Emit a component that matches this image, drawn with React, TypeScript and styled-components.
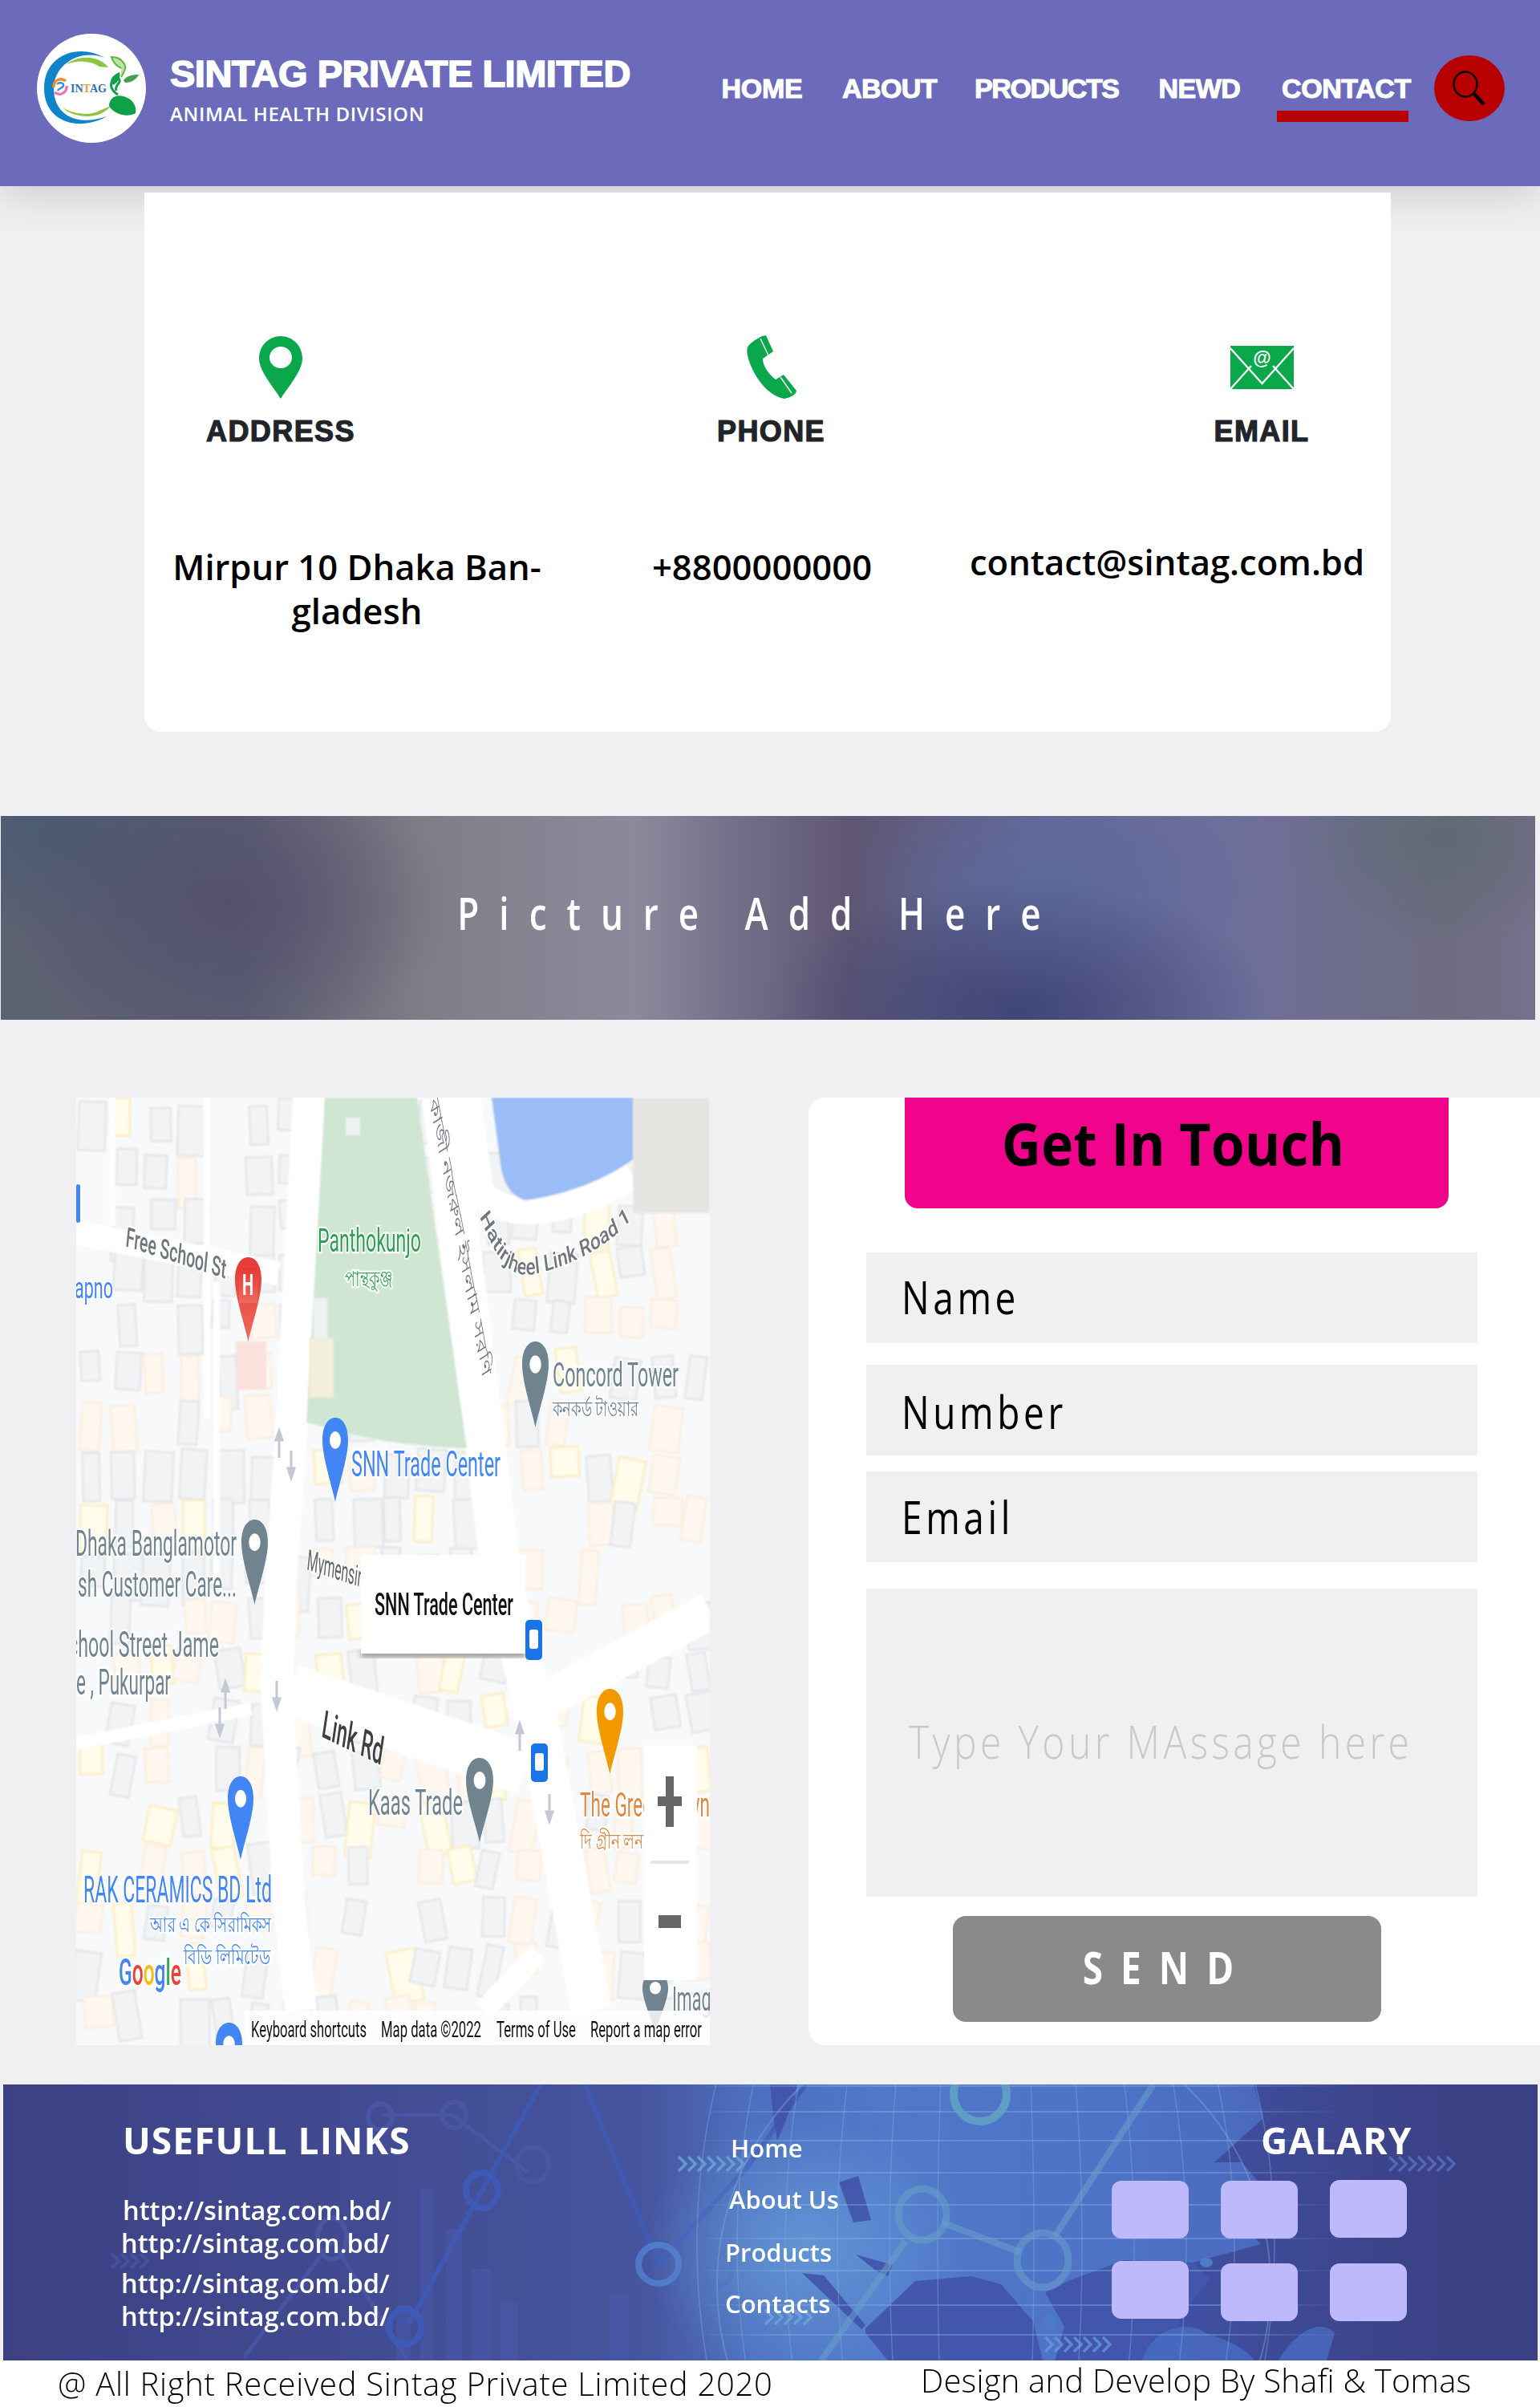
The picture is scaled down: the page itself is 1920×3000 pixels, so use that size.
import React from "react";
import styled, { createGlobalStyle } from "styled-components";

const Global = createGlobalStyle`
  html, body { margin: 0; padding: 0; background: #f0f0f2; }
  * { box-sizing: border-box; }
`;

const OPEN = `"Open Sans", "Noto Sans", sans-serif`;
const ARIAL = `"Liberation Sans", Arial, sans-serif`;
const ROBOTO = `Roboto, "Noto Sans", sans-serif`;

const Page = styled.div`
  width: 1920px;
  height: 3000px;
  overflow: hidden;
  background: #f0f0f2;
  font-family: ${OPEN};
`;

/* ---------- header ---------- */
const Header = styled.header`
  height: 232px;
  background: #6c6bbb;
  box-shadow: 0 8px 50px rgba(0, 0, 0, 0.17);
  display: flex;
  align-items: center;
  padding: 0 44px 12px 46px;
`;
const LogoMark = styled.svg`
  width: 136px;
  height: 136px;
  flex: none;
`;
const Brand = styled.div`
  margin-left: 30px;
  padding-top: 6px;
  color: #fff;
`;
const BrandName = styled.div`
  font: 700 47px/40px ${ARIAL};
  letter-spacing: -0.5px;
  -webkit-text-stroke: 1.6px #fff;
  white-space: nowrap;
`;
const BrandSub = styled.div`
  margin-top: 18px;
  font: 600 24px/24px ${OPEN};
  letter-spacing: 0.65px;
  white-space: nowrap;
`;
const Nav = styled.nav`
  margin-left: auto;
  display: flex;
  align-items: center;
  gap: 50px;
`;
const NavLink = styled.a<{ $active?: boolean; $width: number; $spacing: number; $nudge?: number }>`
  position: relative;
  left: ${(p) => p.$nudge ?? 0}px;
  width: ${(p) => p.$width}px;
  text-align: center;
  color: #fff;
  font: 700 34px/34px ${ARIAL};
  letter-spacing: ${(p) => p.$spacing}px;
  -webkit-text-stroke: 1.1px #fff;
  white-space: nowrap;
  &::after {
    content: "";
    display: ${(p) => (p.$active ? "block" : "none")};
    position: absolute;
    left: -6px;
    right: 2px;
    top: 45px;
    height: 14px;
    background: #b80000;
  }
`;
const SearchButton = styled.button`
  margin-left: 30px;
  width: 88px;
  height: 82px;
  border: 0;
  padding: 0;
  border-radius: 50%;
  background: #b80000;
  display: flex;
  align-items: center;
  justify-content: center;
`;

/* ---------- contact card ---------- */
const InfoCard = styled.section`
  margin: 8px 0 0 180px;
  width: 1554px;
  height: 672px;
  background: #fff;
  border-radius: 0 0 20px 20px;
  padding-top: 178px;
`;
const InfoHeads = styled.div`
  display: flex;
  justify-content: space-between;
  padding: 0 61px 0 70px;
`;
const InfoHead = styled.div`
  width: 200px;
  display: flex;
  flex-direction: column;
  align-items: center;
`;
const IconSlot = styled.div`
  height: 80px;
  display: flex;
  align-items: center;
  justify-content: center;
`;
const InfoLabel = styled.div`
  margin-top: 22px;
  font: 700 36px/36px ${ARIAL};
  letter-spacing: 1.4px;
  -webkit-text-stroke: 1.2px #212529;
  color: #212529;
`;
const InfoValues = styled.div`
  margin-top: 123px;
  display: grid;
  grid-template-columns: 504px 506px 504px;
  padding-left: 13px;
`;
const InfoValue = styled.div<{ $lift?: number }>`
  margin-top: ${(p) => -(p.$lift ?? 0)}px;
  text-align: center;
  color: #000;
  font: 600 43.6px/55px ${OPEN};
  white-space: nowrap;
`;

/* ---------- banner ---------- */
const Banner = styled.section`
  margin: 105px 0 0 1px;
  width: 1913px;
  height: 254px;
  display: flex;
  align-items: center;
  justify-content: center;
  padding: 0 22px 14px 0;
  background:
    radial-gradient(ellipse 320px 160px at 1270px 240px, #3f4575 0%, rgba(63, 69, 117, 0) 100%),
    radial-gradient(ellipse 250px 130px at 1310px 90px, rgba(90, 105, 155, 0.9) 0%, rgba(90, 105, 155, 0) 100%),
    radial-gradient(ellipse 280px 180px at 280px 110px, rgba(82, 78, 108, 0.85) 0%, rgba(82, 78, 108, 0) 100%),
    radial-gradient(ellipse 240px 130px at 60px 20px, rgba(70, 90, 115, 0.8) 0%, rgba(70, 90, 115, 0) 100%),
    radial-gradient(ellipse 200px 130px at 1800px 30px, rgba(95, 105, 115, 0.9) 0%, rgba(95, 105, 115, 0) 100%),
    linear-gradient(90deg, #5d6272 0, #5b5d72 300px, #7e7d86 520px, #8a8a9c 790px, #736e88 920px, #5f5674 1060px, #65699a 1300px, #6f6f9a 1570px, #6d6c80 1800px, #76708c 1913px);
`;
const BannerText = styled.h2`
  margin: 0;
  color: #fff;
  font: 600 44px/56px ${OPEN};
  letter-spacing: 25px;
  word-spacing: -4px;
  transform: scaleY(1.27);
  white-space: nowrap;
`;

/* ---------- map + form ---------- */
const Main = styled.section`
  margin-top: 97px;
  display: flex;
  gap: 123px;
  padding-left: 95px;
  height: 1181px;
`;
const MapSvg = styled.svg`
  width: 790px;
  height: 1181px;
  flex: none;
  display: block;
  font-family: ${ROBOTO};
`;
const FormCard = styled.form`
  flex: 1;
  background: #fff;
  border-radius: 20px 0 0 20px;
  display: flex;
  flex-direction: column;
  align-items: flex-start;
`;
const FormTitle = styled.div`
  margin-left: 120px;
  width: 678px;
  height: 138px;
  flex: none;
  background: #f0048c;
  border-radius: 0 0 16px 16px;
  display: flex;
  align-items: center;
  justify-content: center;
  padding: 0 9px 24px 0;
  color: #000;
  font: 700 68px/80px ${OPEN};
`;
const FormTitleText = styled.span`
  display: inline-block;
  transform: scaleY(1.09);
`;
const Field = styled.div<{ $top: number; $height?: number }>`
  margin: ${(p) => p.$top}px 0 0 72px;
  width: 762px;
  height: ${(p) => p.$height ?? 113}px;
  flex: none;
  background: #f0f0f2;
  display: flex;
  align-items: center;
  padding-left: 44px;
`;
const FieldText = styled.span<{ $hint?: boolean; $raise?: number }>`
  display: inline-block;
  margin-top: ${(p) => -(p.$raise ?? 0)}px;
  transform: scaleY(${(p) => (p.$hint ? 1.2 : 1.25)});
  white-space: nowrap;
  font: ${(p) => (p.$hint ? 300 : 400)} ${(p) => (p.$hint ? 48 : 46)}px/60px ${OPEN};
  letter-spacing: ${(p) => (p.$hint ? 4.4 : 4.6)}px;
  color: ${(p) => (p.$hint ? "#c9c7c9" : "#000")};
  margin-left: ${(p) => (p.$hint ? 9 : 0)}px;
`;
const SendButton = styled.button`
  margin: 24px 0 0 180px;
  width: 534px;
  height: 132px;
  flex: none;
  border: 0;
  border-radius: 16px;
  background: #8a8a8a;
  display: flex;
  align-items: center;
  justify-content: center;
  padding: 0 0 6px 0;
  color: #fff;
  font: 700 46px/60px ${OPEN};
  letter-spacing: 22px;
`;
const SendText = styled.span`
  display: inline-block;
  transform: scaleY(1.2);
`;

/* ---------- footer ---------- */
const Footer = styled.footer`
  position: relative;
  overflow: hidden;
  margin: 49px 0 0 4px;
  width: 1913px;
  height: 344px;
  background: linear-gradient(90deg, #3d4184 0, #414a90 400px, #46559f 800px, #4e6fbf 930px, #5078c9 1100px, #4e72c6 1400px, #4a68bc 1600px);
  color: #fff;
  display: flex;
  padding-left: 149px;
`;
const FooterArt = styled.svg`
  position: absolute;
  inset: 0;
  width: 1913px;
  height: 344px;
`;
const FooterCol = styled.div<{ $width: number; $top?: number }>`
  position: relative;
  flex: none;
  width: ${(p) => p.$width}px;
  padding-top: ${(p) => p.$top ?? 46}px;
`;
const FooterTitle = styled.h3<{ $indent?: number }>`
  margin: 0 0 0 ${(p) => p.$indent ?? 0}px;
  font: 700 46px/46px ${OPEN};
  letter-spacing: 1.1px;
  white-space: nowrap;
`;
const UrlList = styled.div`
  margin-top: 44px;
`;
const UrlLine = styled.div<{ $gap?: number; $shift?: number }>`
  margin: ${(p) => p.$gap ?? 0}px 0 0 ${(p) => p.$shift ?? 0}px;
  font: 600 32.6px/41px ${OPEN};
  white-space: nowrap;
`;
const FooterLink = styled.div<{ $gap?: number; $indent: number }>`
  margin: ${(p) => p.$gap ?? 0}px 0 0 ${(p) => p.$indent}px;
  font: 600 31px/36px ${OPEN};
  white-space: nowrap;
`;
const Gallery = styled.div`
  margin-top: 28px;
  display: grid;
  grid-template-columns: 96px 96px 96px;
  column-gap: 40px;
  row-gap: 28px;
`;
const GalleryTile = styled.div<{ $shift?: number }>`
  height: 72px;
  margin-top: ${(p) => p.$shift ?? 0}px;
  background: #bdb9fb;
  border-radius: 12px;
`;
const CopyBar = styled.div`
  height: 58px;
  background: #fff;
  color: #000;
  display: flex;
  align-items: flex-start;
  font: 300 40px/44px ${OPEN};
  white-space: nowrap;
`;
const CopyLeft = styled.div`
  margin: 7px 0 0 72px;
  width: 1076px;
  flex: none;
  letter-spacing: 0.7px;
`;
const CopyRight = styled.div`
  margin-top: 3px;
  letter-spacing: 0.2px;
`;

/* ---------- drawings ---------- */
const Logo = () => (
  <LogoMark viewBox="0 0 136 136">
    <circle cx="68" cy="68" r="68" fill="#fff" />
    <path d="M84 30C55 12 9 24 9 68c0 44 46 54 78 35-32 12-66 2-66-35 0-30 34-50 63-38z" fill="#0f84cb" />
    <path d="M37 38c13-10 38-13 52 4l-11-1c-13-8-28-8-41-3z" fill="#8cc63f" />
    <path d="M32 92c13 8 33 11 46 4l14-6c-13 18-46 16-60 2z" fill="#8cc63f" />
    <path d="M21 67c-1-9 9-13 15-8" stroke="#f28c28" strokeWidth="3.5" fill="none" />
    <path d="M37 65c1 9-9 13-15 8" stroke="#e678b4" strokeWidth="3.5" fill="none" />
    <path d="M25 63c3-3 9-2 8 2-1 3-6 3-7 6" stroke="#2b8fd6" strokeWidth="2.4" fill="none" />
    <text x="42" y="73" textLength="45" lengthAdjust="spacingAndGlyphs" fontFamily="'Liberation Serif', serif" fontWeight="700" fontSize="15" fill="#2b6fb8">
      IN<tspan fill="#f0a030">T</tspan>AG
    </text>
    <path d="M90 90c0-9 8-15 18-12 11 3 17 12 15 21-9 6-27 2-33-9z" fill="#0fa04a" />
    <path d="M101 76c-8-5-11-12-6-19 3-4 9-2 8 3-2 4-6 6-4 11" stroke="#0fa04a" strokeWidth="3" fill="none" />
    <path d="M92 58c2-5 6-8 11-10 2 6-2 13-8 16z" fill="#0fa04a" />
    <path d="M105 54c6-9 7-14 2-19-3-4-8-6-14-6 2 7 6 11 12 14" stroke="#5db346" strokeWidth="2" fill="#bfe0a0" />
    <path d="M108 58c4-5 9-7 19-7-3 6-9 10-17 10z" fill="#3fa14a" />
  </LogoMark>
);

const SearchIcon = () => (
  <svg width="42" height="44" viewBox="0 0 42 44">
    <ellipse cx="16" cy="17" rx="14.5" ry="15.5" fill="none" stroke="#000" strokeWidth="2.4" />
    <path d="M27 29l12 13" stroke="#000" strokeWidth="4.5" />
  </svg>
);

const PinIcon = () => (
  <svg width="54" height="78" viewBox="0 0 54 78">
    <path fillRule="evenodd" fill="#0aa74b" d="M27 0C12 0 0 12 0 28c0 16 20 38 27 50 7-12 27-34 27-50C54 12 42 0 27 0zm0 13a14 13.5 0 1 1 0 27 14 13.5 0 0 1 0-27z" />
  </svg>
);

const PhoneIcon = () => (
  <svg width="62" height="80" viewBox="0 0 62 80">
    <path fill="#0aa74b" d="M19 1l5-1 9 20-13 9c0 9 7 19 16 26l10-6 16 20-1 3c-4 4-9 6-14 7C30 76 16 60 8 44 2 32-1 20 1 15c3-6 11-10 18-14z" />
    <path d="M17 4l10 21M42 52l14 20" stroke="#fff" strokeWidth="1.4" fill="none" />
  </svg>
);

const MailIcon = () => (
  <svg width="79" height="54" viewBox="0 0 79 54">
    <rect width="79" height="54" fill="#0aa74b" />
    <path d="M0 3l39.5 44L79 3M0 54l26-29M79 54L53 25" stroke="#fff" strokeWidth="2.2" fill="none" />
    <text x="39.5" y="23" textAnchor="middle" fontFamily="'Liberation Sans', sans-serif" fontWeight="700" fontSize="23" fill="#fff">@</text>
  </svg>
);

/* map building scatter: a small seeded generator, so the blocks look hand placed */
type Block = { x: number; y: number; w: number; h: number; k: number; r: number };
const blocks: Block[] = (() => {
  let s = 1234567;
  const rnd = () => {
    s = (s * 16807) % 2147483647;
    return s / 2147483647;
  };
  const out: Block[] = [];
  for (let y = 0; y < 1150; y += 62) {
    for (let x = 0; x < 790; x += 42) {
      if (rnd() < 0.22) continue;
      const right = x > 520 || y > 600;
      const v = rnd();
      const k = right ? (v < 0.35 ? 1 : v < 0.5 ? 2 : 0) : v < 0.78 ? 0 : v < 0.9 ? 1 : 2;
      out.push({
        x: x + rnd() * 10,
        y: y + rnd() * 14,
        w: 20 + rnd() * 16,
        h: 34 + rnd() * 34,
        k,
        r: right ? (rnd() - 0.5) * 24 : (rnd() - 0.5) * 8,
      });
    }
  }
  return out;
})();
const blockFill = ["#f1f3f4", "#fef8f0", "#fffcec"];
const blockLine = ["#e3e5e9", "#fcedde", "#fcecc0"];

const Pin = ({ x, y, h, w, fill }: { x: number; y: number; h: number; w: number; fill: string }) => (
  <g transform={`translate(${x} ${y}) scale(${w / 32} ${h / 105})`}>
    <path d="M16 0C7 0 0 10 0 28c0 22 12 57 16 77 4-20 16-55 16-77C32 10 25 0 16 0z" fill={fill} />
    <ellipse cx="16" cy="28" rx="7" ry="11" fill="#fff" />
  </g>
);

type LabelProps = { x: number; y: number; size: number; fill: string; w?: number; rot?: number; weight?: number; halo?: boolean; children: React.ReactNode };
const Label = ({ x, y, size, fill, w, rot = 0, weight = 400, halo = true, children }: LabelProps) => (
  <text
    transform={`translate(${x} ${y}) scale(1 1.8) rotate(${rot})`}
    fontSize={size}
    fill={fill}
    fontWeight={weight}
    textLength={w}
    lengthAdjust={w ? "spacingAndGlyphs" : undefined}
    stroke={halo ? "#fff" : undefined}
    strokeWidth={halo ? 2.5 : undefined}
    paintOrder="stroke"
  >
    {children}
  </text>
);

const Arrow = ({ x, y, up }: { x: number; y: number; up?: boolean }) => (
  <path d={up ? `M${x} ${y + 34}V${y + 10}M${x - 4} ${y + 12}L${x} ${y}L${x + 4} ${y + 12}z` : `M${x} ${y}V${y + 24}M${x - 4} ${y + 22}L${x} ${y + 34}L${x + 4} ${y + 22}z`} stroke="#c3c8d4" strokeWidth="3" fill="#c3c8d4" />
);

const GRAY = "#70848f";
const BLUE = "#4285f4";

const MapView = () => (
  <MapSvg viewBox="0 0 790 1181">
    <defs>
      <filter id="soft"><feGaussianBlur stdDeviation="1" /></filter>
      <filter id="softer"><feGaussianBlur stdDeviation="3" /></filter>
      <linearGradient id="redPin" x1="0" y1="0" x2="0" y2="1">
        <stop offset="0" stopColor="#e53935" />
        <stop offset="1" stopColor="#ee6a5c" />
      </linearGradient>
      <path id="hatir" d="M503 99C525 135 540 152 575 146 615 140 660 125 688 104" />
    </defs>
    <rect width="790" height="1181" fill="#f8f9fa" />
    <g filter="url(#soft)">
      {blocks.map((b, i) => (
        <rect key={i} x={b.x} y={b.y} width={b.w} height={b.h} fill={blockFill[b.k]} stroke={blockLine[b.k]} strokeWidth="2.5" transform={`rotate(${b.r} ${b.x} ${b.y})`} />
      ))}
      <path d="M0 168L252 219" stroke="#fff" strokeWidth="30" fill="none" />
      <path d="M290 0L268 417 255 602 250 740 265 1000 280 1138" stroke="#fff" strokeWidth="40" fill="none" />
      <path d="M456 0L531 602 576 780 642 1138" stroke="#fff" strokeWidth="50" fill="none" />
      <path d="M487 0L503 113C520 150 600 155 694 97" stroke="#fff" strokeWidth="34" fill="none" />
      <path d="M267 738L560 837" stroke="#fff" strokeWidth="64" fill="none" />
      <path d="M545 772L790 640" stroke="#fff" strokeWidth="46" fill="none" />
      <path d="M0 805L218 762" stroke="#fff" strokeWidth="16" fill="none" />
      <path d="M508 1138L576 1066" stroke="#fff" strokeWidth="26" fill="none" />
      <path d="M163 0V400M45 0V160M175 230V600" stroke="#fff" strokeWidth="8" fill="none" />
      <path d="M310 0H425L487 437C440 436 390 430 351 421L287 405z" fill="#cfe6d3" />
      <path d="M518 0H694V77C665 100 610 122 560 128 545 124 535 112 530 90z" fill="#9bbdf7" />
      <rect x="694" width="96" height="144" fill="#e5e5e2" />
      <rect x="291" y="300" width="30" height="74" fill="#f2efdc" stroke="#ebe6c8" />
      <rect x="296" y="250" width="17" height="50" fill="#eff1f3" />
      <rect x="336" y="25" width="18" height="22" fill="#eef1ee" />
      <rect x="199" y="304" width="38" height="60" fill="#fbe1dc" />
    </g>
    <rect x="0" y="108" width="5" height="48" rx="3" fill={BLUE} />
    <Arrow x={253} y={415} up />
    <Arrow x={268} y={440} />
    <Arrow x={186} y={728} up />
    <Arrow x={250} y={727} />
    <Arrow x={179} y={760} />
    <Arrow x={553} y={780} up />
    <Arrow x={590} y={868} />

    <Label x={61} y={185} size={19} fill="#6f767c" w={127} rot={10.2} weight={500}>Free School St</Label>
    <Label x={-2} y={250} size={21} fill={BLUE} w={48}>apno</Label>
    <Label x={301} y={192} size={23} fill="#2e9e50" w={129}>Panthokunjo</Label>
    <Label x={335} y={235} size={15} fill="#3aa65c" w={60}>পান্থকুঞ্জ</Label>
    <Label x={440} y={5} size={17} fill="#6f767c" w={203} rot={70.7}>কাজী নজরুল ইসলাম সরণি</Label>
    <g transform="scale(1 1.5)">
      <text fontSize="19" fontWeight="500" fill="#6f767c" stroke="#fff" strokeWidth="2.5" paintOrder="stroke">
        <textPath href="#hatir" textLength="220" lengthAdjust="spacingAndGlyphs">Hatirjheel Link Road 1</textPath>
      </text>
    </g>
    <Pin x={556} y={304} w={33} h={107} fill={GRAY} />
    <Label x={594} y={360} size={24} fill={GRAY} w={157}>Concord Tower</Label>
    <Label x={594} y={397} size={15} fill={GRAY} w={107}>কনকর্ড টাওয়ার</Label>
    <Pin x={198} y={199} w={33} h={105} fill="url(#redPin)" />
    <rect x="203" y="212" width="23" height="44" fill="url(#redPin)" />
    <Label x={207} y={246} size={20} fill="#fff" weight={700} halo={false}>H</Label>
    <Pin x={307} y={399} w={32} h={105} fill={BLUE} />
    <Label x={343} y={472} size={25} fill={BLUE} w={186}>SNN Trade Center</Label>
    <Label x={-1} y={571} size={25} fill={GRAY} w={201}>Dhaka Banglamotor</Label>
    <Pin x={206} y={526} w={33} h={106} fill={GRAY} />
    <Label x={2} y={622} size={25} fill={GRAY} w={198}>sh Customer Care...</Label>
    <Label x={-10} y={697} size={25} fill={GRAY} w={188}>chool Street Jame</Label>
    <Label x={0} y={744} size={25} fill={GRAY} w={118}>e , Pukurpar</Label>
    <Label x={287} y={588} size={20} fill="#5f6368" rot={10.2} w={90}>Mymensingh</Label>

    <rect x="355" y="688" width="205" height="10" fill="#9f9c98" filter="url(#softer)" />
    <rect x="355" y="570" width="205" height="123" fill="#fff" />
    <Label x={372} y={645} size={22} fill="#111" weight={500} w={173} halo={false}>SNN Trade Center</Label>
    <rect x="560" y="651" width="21" height="50" rx="5" fill="#1a73e8" />
    <rect x="565" y="663" width="11" height="24" rx="3" fill="#fff" />
    <rect x="567" y="805" width="21" height="48" rx="5" fill="#1a73e8" />
    <rect x="572" y="817" width="11" height="22" rx="3" fill="#fff" />

    <Label x={305} y={796} size={27} fill="#3c4043" rot={14.9} weight={500} w={78}>Link Rd</Label>
    <Label x={364} y={894} size={25} fill={GRAY} w={118}>Kaas Trade</Label>
    <Pin x={486} y={823} w={34} h={105} fill={GRAY} />
    <Pin x={649} y={737} w={33} h={106} fill="#f29900" />
    <Label x={628} y={896} size={24} fill="#d98a45" w={162}>The Green Lawn</Label>
    <Label x={628} y={936} size={15} fill="#d98a45" w={79}>দি গ্রীন লন</Label>
    <Pin x={189} y={846} w={32} h={104} fill={BLUE} />
    <Label x={9} y={1003} size={26} fill={BLUE} w={235}>RAK CERAMICS BD Ltd</Label>
    <Label x={92} y={1040} size={15} fill={BLUE} w={152}>আর এ কে সিরামিকস</Label>
    <Label x={134} y={1080} size={15} fill={BLUE} w={108}>বিডি লিমিটেড</Label>
    <Label x={53} y={1106} size={26} fill={BLUE} w={78} weight={500}>
      G<tspan fill="#ea4335">o</tspan><tspan fill="#fbbc05">o</tspan>g<tspan fill="#34a853">l</tspan><tspan fill="#ea4335">e</tspan>
    </Label>

    <Pin x={706} y={1090} w={32} h={74} fill={GRAY} />
    <Label x={743} y={1138} size={24} fill={GRAY} w={60}>Image</Label>
    <rect x="708" y="807" width="66" height="293" fill="#fff" />
    <path d="M725 877H755" stroke="#666" strokeWidth="12" />
    <path d="M740 846V909" stroke="#666" strokeWidth="10" />
    <path d="M716 953H764" stroke="#e6e6e6" strokeWidth="4" />
    <rect x="726" y="1019" width="28" height="16" fill="#666" />

    <Pin x={174} y={1153} w={33} h={100} fill={BLUE} />
    <rect x="210" y="1138" width="580" height="43" fill="#fff" fillOpacity="0.82" />
    <Label x={218} y={1171} size={15} fill="#111" w={144} halo={false}>Keyboard shortcuts</Label>
    <Label x={380} y={1171} size={15} fill="#111" w={125} halo={false}>Map data ©2022</Label>
    <Label x={524} y={1171} size={15} fill="#111" w={99} halo={false}>Terms of Use</Label>
    <Label x={641} y={1171} size={15} fill="#111" w={139} halo={false}>Report a map error</Label>
  </MapSvg>
);

const chevronRuns = [
  { x: 842, y: 99, n: 7, c: "#69a7d8", o: 0.8 },
  { x: 1728, y: 99, n: 7, c: "#5a70c4", o: 0.8 },
  { x: 1299, y: 324, n: 7, c: "#6aa0dc", o: 0.7 },
  { x: 135, y: 220, n: 4, c: "#4a56a4", o: 0.8 },
  { x: 950, y: 290, n: 5, c: "#7ab0e0", o: 0.6 },
];
const gridY = [2, 34, 70, 110, 150, 192, 232, 275, 312];
const meridians = [60, 120, 185, 250, 310, 360];
const seas = [
  "M1075 304L1137 245 1207 239 1244 249 1284 295 1296 344H1103L1075 310z",
  "M1299 259L1330 244 1397 219 1483 222 1504 242 1464 292 1476 344H1311L1323 302z",
  "M996 235L1023 238 1075 300 1070 305z",
  "M1063 212L1109 225 1103 239 1088 232z",
  "M1042 122L1066 114 1082 169 1060 172z",
  "M956 0L990 0C985 20 975 50 965 70 960 40 958 20 956 0z",
];

const FooterBackdrop = () => (
  <FooterArt viewBox="0 0 1913 344">
    <defs>
      <radialGradient id="glow" cx="0.5" cy="0.6" r="0.5">
        <stop offset="0" stopColor="#6aa3dc" stopOpacity="0.7" />
        <stop offset="1" stopColor="#6aa3dc" stopOpacity="0" />
      </radialGradient>
      <linearGradient id="eastSea" gradientUnits="userSpaceOnUse" x1="1400" y1="0" x2="1800" y2="0">
        <stop offset="0" stopColor="#4153aa" />
        <stop offset="0.7" stopColor="#3d468e" />
        <stop offset="1" stopColor="#3b4185" />
      </linearGradient>
      <linearGradient id="gridFade" gradientUnits="userSpaceOnUse" x1="860" y1="0" x2="1680" y2="0">
        <stop offset="0" stopColor="#8ab8e0" stopOpacity="0" />
        <stop offset="0.15" stopColor="#8ab8e0" stopOpacity="0.38" />
        <stop offset="0.8" stopColor="#8ab8e0" stopOpacity="0.38" />
        <stop offset="1" stopColor="#8ab8e0" stopOpacity="0" />
      </linearGradient>
    </defs>
    {[[520, 130, 16, 214], [552, 180, 20, 164], [585, 230, 22, 114], [620, 270, 22, 74], [755, 260, 24, 84], [490, 275, 18, 69]].map(([x, y, w, h], i) => (
      <rect key={i} x={x} y={y} width={w} height={h} fill="#4a59ab" opacity="0.55" />
    ))}
    <path d="M670 0L597 132 505 300M725 0L817 224 930 100 1000 0" stroke="#3f5ab6" strokeWidth="6" fill="none" opacity="0.9" />
    <path d="M300 340L410 195 505 345M472 38L560 38 655 110" stroke="#4a5aae" strokeWidth="5" fill="none" opacity="0.7" />
    <ellipse cx="597" cy="132" rx="20" ry="22" fill="none" stroke="#3f5ab6" strokeWidth="8" />
    <ellipse cx="501" cy="302" rx="20" ry="22" fill="none" stroke="#3f5ab6" strokeWidth="8" />
    <ellipse cx="817" cy="224" rx="25" ry="24" fill="none" stroke="#5078c8" strokeWidth="8" />
    <ellipse cx="470" cy="40" rx="15" ry="16" fill="none" stroke="#4a56a4" strokeWidth="6" />
    <ellipse cx="562" cy="38" rx="15" ry="16" fill="none" stroke="#4a56a4" strokeWidth="6" />
    <ellipse cx="660" cy="100" rx="20" ry="22" fill="none" stroke="#4a56a4" strokeWidth="6" />
    <ellipse cx="410" cy="192" rx="18" ry="26" fill="none" stroke="#4a56a4" strokeWidth="6" />
    <ellipse cx="885" cy="230" rx="25" ry="22" fill="none" stroke="#4a62b4" strokeWidth="5" />

    <rect x="800" width="400" height="344" fill="url(#glow)" />
    {seas.map((d, i) => (
      <path key={i} d={d} fill="#4153aa" opacity="0.9" />
    ))}
    <path d="M1559 0L1571 42 1510 97 1544 97 1568 125 1538 169 1568 199 1483 222 1504 242 1464 292 1476 344H1913V0z" fill="url(#eastSea)" />
    <path d="M1420 344C1430 310 1470 290 1500 310 1530 320 1550 330 1560 344zM1590 344C1610 310 1640 290 1660 310L1650 344z" fill="#4a70c8" opacity="0.7" />
    <ellipse cx="1500" cy="222" rx="8" ry="6" fill="#4c7cc8" />
    <ellipse cx="1306" cy="296" rx="8" ry="11" fill="#4c7cc8" />

    {gridY.map((y) => (
      <path key={y} d={`M860 ${y}H1680`} stroke="url(#gridFade)" strokeWidth="2" />
    ))}
    {meridians.map((r) => (
      <ellipse key={r} cx="1225" cy="200" rx={r} ry="560" fill="none" stroke="#7fb0dc" strokeWidth="1.5" opacity="0.4" />
    ))}
    <circle cx="1235" cy="250" r="345" fill="none" stroke="#7fb0dc" strokeWidth="2" opacity="0.4" />
    <path d="M1020 344L1125 195M1170 172L1268 209M1311 189L1434 0" stroke="#6aa0c8" strokeWidth="8" fill="none" opacity="0.55" />
    <ellipse cx="1218" cy="12" rx="33" ry="34" fill="none" stroke="#62a4c4" strokeWidth="10" opacity="0.85" />
    <ellipse cx="1146" cy="162" rx="30" ry="32" fill="none" stroke="#6aa0c8" strokeWidth="9" opacity="0.55" />
    <ellipse cx="1296" cy="219" rx="32" ry="34" fill="none" stroke="#6aa0c8" strokeWidth="9" opacity="0.55" />
    {chevronRuns.map((run, i) => (
      <path
        key={i}
        d={Array.from({ length: run.n }, (_, k) => {
          const x = run.x + k * 12;
          return `M${x} ${run.y - 9}l9 9-9 9`;
        }).join("")}
        stroke={run.c}
        strokeWidth="3.5"
        fill="none"
        opacity={run.o}
      />
    ))}
  </FooterArt>
);

const navItems = [
  { label: "HOME", width: 102, spacing: -0.3, nudge: 0 },
  { label: "ABOUT", width: 117, spacing: -0.6, nudge: -1 },
  { label: "PRODUCTS", width: 177, spacing: -1.4, nudge: -3 },
  { label: "NEWD", width: 103, spacing: -0.5, nudge: -1 },
];

export default function App() {
  return (
    <Page>
      <Global />
      <Header>
        <Logo />
        <Brand>
          <BrandName>SINTAG PRIVATE LIMITED</BrandName>
          <BrandSub>ANIMAL HEALTH DIVISION</BrandSub>
        </Brand>
        <Nav>
          {navItems.map((n) => (
            <NavLink key={n.label} $width={n.width} $spacing={n.spacing} $nudge={n.nudge}>{n.label}</NavLink>
          ))}
          <NavLink $width={160} $spacing={-0.4} $active>CONTACT</NavLink>
        </Nav>
        <SearchButton type="button" aria-label="Search"><SearchIcon /></SearchButton>
      </Header>

      <InfoCard>
        <InfoHeads>
          <InfoHead>
            <IconSlot><PinIcon /></IconSlot>
            <InfoLabel>ADDRESS</InfoLabel>
          </InfoHead>
          <InfoHead>
            <IconSlot><PhoneIcon /></IconSlot>
            <InfoLabel>PHONE</InfoLabel>
          </InfoHead>
          <InfoHead>
            <IconSlot><MailIcon /></IconSlot>
            <InfoLabel>EMAIL</InfoLabel>
          </InfoHead>
        </InfoHeads>
        <InfoValues>
          <InfoValue>Mirpur 10 Dhaka Ban-<br />gladesh</InfoValue>
          <InfoValue>+8800000000</InfoValue>
          <InfoValue $lift={6}>contact@sintag.com.bd</InfoValue>
        </InfoValues>
      </InfoCard>

      <Banner>
        <BannerText>Picture Add Here</BannerText>
      </Banner>

      <Main>
        <MapView />
        <FormCard>
          <FormTitle><FormTitleText>Get In Touch</FormTitleText></FormTitle>
          <Field $top={55}><FieldText $raise={6}>Name</FieldText></Field>
          <Field $top={27}><FieldText>Number</FieldText></Field>
          <Field $top={20}><FieldText $raise={4}>Email</FieldText></Field>
          <Field $top={33} $height={384}><FieldText $hint $raise={4}>Type Your MAssage here</FieldText></Field>
          <SendButton type="button"><SendText>SEND</SendText></SendButton>
        </FormCard>
      </Main>

      <Footer>
        <FooterBackdrop />
        <FooterCol $width={751}>
          <FooterTitle>USEFULL LINKS</FooterTitle>
          <UrlList>
            <UrlLine>http://sintag.com.bd/</UrlLine>
            <UrlLine $shift={-2}>http://sintag.com.bd/</UrlLine>
            <UrlLine $shift={-2} $gap={9}>http://sintag.com.bd/</UrlLine>
            <UrlLine $shift={-2}>http://sintag.com.bd/</UrlLine>
          </UrlList>
        </FooterCol>
        <FooterCol $width={482} $top={61}>
          <FooterLink $indent={7}>Home</FooterLink>
          <FooterLink $indent={5} $gap={28}>About Us</FooterLink>
          <FooterLink $indent={0} $gap={30}>Products</FooterLink>
          <FooterLink $indent={0} $gap={28}>Contacts</FooterLink>
        </FooterCol>
        <FooterCol $width={400}>
          <FooterTitle $indent={186}>GALARY</FooterTitle>
          <Gallery>
            <GalleryTile />
            <GalleryTile />
            <GalleryTile $shift={-1} />
            <GalleryTile />
            <GalleryTile $shift={3} />
            <GalleryTile $shift={3} />
          </Gallery>
        </FooterCol>
      </Footer>
      <CopyBar>
        <CopyLeft>@ All Right Received Sintag Private Limited 2020</CopyLeft>
        <CopyRight>Design and Develop By Shafi &amp; Tomas</CopyRight>
      </CopyBar>
    </Page>
  );
}
